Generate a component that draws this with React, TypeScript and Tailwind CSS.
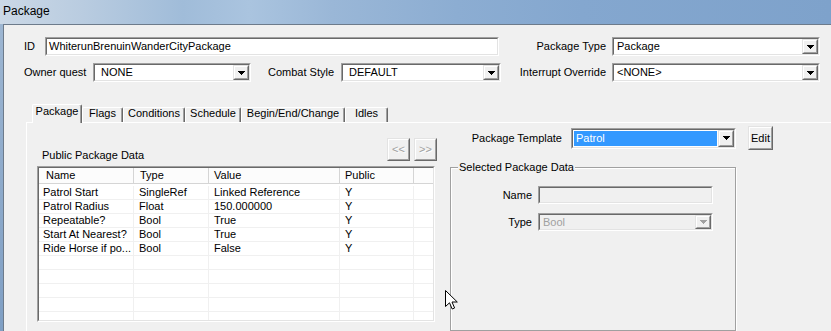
import React from "react";

const sunkenOuter = "border border-[#a0a0a0] border-b-white border-r-white";
const sunkenInner = "border border-[#696969] border-b-[#e3e3e3] border-r-[#e3e3e3]";
const raisedOuter = "border border-[#e3e3e3] border-b-[#696969] border-r-[#696969]";
const raisedInner = "border border-white border-b-[#a0a0a0] border-r-[#a0a0a0]";

const Arrow = ({ disabled }: { disabled?: boolean }) => (
  <div className={`w-[16px] h-full shrink-0 bg-[#f0f0f0] ${raisedOuter}`}>
    <div className={`w-full h-full flex items-center justify-center ${raisedInner}`}>
      <svg width="7" height="4" viewBox="0 0 7 4" shapeRendering="crispEdges">
        <path d="M0 0H7L3.5 4Z" fill={disabled ? "#a0a0a0" : "#000"} />
      </svg>
    </div>
  </div>
);

type ComboProps = {
  size: string;
  text: string;
  pad?: string;
  disabled?: boolean;
  selected?: boolean;
};

const Combo = ({ size, text, pad = "pl-[3px]", disabled, selected }: ComboProps) => (
  <div className={`${size} shrink-0 ${sunkenOuter}`}>
    <div className={`h-full flex ${sunkenInner} ${disabled ? "bg-[#f0f0f0]" : "bg-white"}`}>
      {selected ? (
        <div className="flex-1 flex py-[1px] pl-[1px] pr-[1px]">
          <div className="flex-1 flex items-center bg-[#3399ff] text-white pl-[2px]">{text}</div>
        </div>
      ) : (
        <div className={`flex-1 flex items-center ${pad} ${disabled ? "text-[#a0a0a0]" : ""}`}>{text}</div>
      )}
      <Arrow disabled={disabled} />
    </div>
  </div>
);

const TextBox = ({ size, text, disabled }: { size: string; text?: string; disabled?: boolean }) => (
  <div className={`${size} shrink-0 ${sunkenOuter}`}>
    <div className={`h-full flex items-center pl-[2px] ${sunkenInner} ${disabled ? "bg-[#f0f0f0]" : "bg-white"}`}>
      {text}
    </div>
  </div>
);

const Button = ({ size, children, disabled }: { size: string; children: React.ReactNode; disabled?: boolean }) => (
  <div className={`${size} shrink-0 bg-[#f0f0f0] ${raisedOuter}`}>
    <div
      className={`w-full h-full flex items-center justify-center ${raisedInner} ${
        disabled ? "text-[#a0a0a0] [text-shadow:1px_1px_0_#fff]" : ""
      }`}
    >
      {children}
    </div>
  </div>
);

const tabs = [
  { name: "Package", w: "w-[50px]" },
  { name: "Flags", w: "w-[41px]" },
  { name: "Conditions", w: "w-[62px]" },
  { name: "Schedule", w: "w-[56px]" },
  { name: "Begin/End/Change", w: "w-[104px]" },
  { name: "Idles", w: "w-[43px]" },
];

const cols = [
  { w: "w-[95px]", hp: "pl-[7px]", rp: "pl-[4px]" },
  { w: "w-[75px]", hp: "pl-[6px]", rp: "pl-[5px]" },
  { w: "w-[131px]", hp: "pl-[5px]", rp: "pl-[5px]" },
  { w: "w-[74px]", hp: "pl-[5px]", rp: "pl-[5px]" },
  { w: "flex-1", hp: "", rp: "" },
];

const headers = ["Name", "Type", "Value", "Public", ""];

const rows = [
  ["Patrol Start", "SingleRef", "Linked Reference", "Y", ""],
  ["Patrol Radius", "Float", "150.000000", "Y", ""],
  ["Repeatable?", "Bool", "True", "Y", ""],
  ["Start At Nearest?", "Bool", "True", "Y", ""],
  ["Ride Horse if po...", "Bool", "False", "Y", ""],
  ["", "", "", "", ""],
  ["", "", "", "", ""],
  ["", "", "", "", ""],
  ["", "", "", "", ""],
  ["", "", "", "", ""],
];

const App = () => {
  return (
    <div className="relative w-[831px] h-[331px] overflow-hidden flex flex-col bg-[#f0f0f0] text-black text-[11px] leading-[13px] font-['Liberation_Sans',Arial,sans-serif]">
      {/* title bar */}
      <div className="h-[24px] shrink-0 flex items-center pl-[3px] pb-[1px] text-[12px] bg-[linear-gradient(90deg,#cbd8e6_0%,#b9cce0_10%,#a0bcd9_22%,#aac4df_30%,#9ab7d7_40%,#8cadd2_55%,#84a7cf_70%,#7ea2cb_100%)]">
        Package
      </div>

      <div className="flex flex-1 min-h-0">
        <div className="w-[3px] shrink-0 bg-[linear-gradient(180deg,#9db6d2,#7f9fc4)]" />
        <div className="flex-1 flex flex-col border-l border-t border-[#6d7b8b] bg-[#f0f0f0]">
          {/* row 1 */}
          <div className="mt-[12px] h-[19px] flex items-center">
            <div className="ml-[20px] w-[21px] shrink-0">ID</div>
            <TextBox size="w-[454px] h-[19px]" text="WhiterunBrenuinWanderCityPackage" />
            <div className="w-[107px] shrink-0 text-right">Package Type</div>
            <div className="ml-[6px]">
              <Combo size="w-[208px] h-[19px]" text="Package" />
            </div>
          </div>

          {/* row 2 */}
          <div className="mt-[7px] h-[19px] flex items-center">
            <div className="ml-[20px] w-[69px] shrink-0">Owner quest</div>
            <Combo size="w-[158px] h-[19px]" text="NONE" pad="pl-[6px]" />
            <div className="w-[90px] shrink-0 text-right pr-[7px]">Combat Style</div>
            <Combo size="w-[160px] h-[19px]" text="DEFAULT" pad="pl-[6px]" />
            <div className="w-[111px] shrink-0 text-right pr-[6px]">Interrupt Override</div>
            <Combo size="w-[208px] h-[19px]" text="<NONE>" />
          </div>

          {/* tabs */}
          <div className="mt-[22px] ml-[22px] pl-[6px] h-[18px] flex items-end">
            {tabs.map((t, i) =>
              i === 0 ? (
                <div
                  key={t.name}
                  className={`${t.w} h-[19px] -mb-[1px] relative z-10 bg-[#f0f0f0] border-t border-l border-white border-r border-r-[#696969] rounded-tl-[2px] rounded-tr-[2px] shadow-[inset_-1px_0_0_#a0a0a0] flex items-start justify-center`}
                >
                  {t.name}
                </div>
              ) : (
                <div
                  key={t.name}
                  className={`${t.w} h-[15px] leading-[11px] border-t border-l border-white border-r border-r-[#696969] rounded-tl-[2px] rounded-tr-[2px] shadow-[inset_-1px_0_0_#a0a0a0] flex items-start justify-center`}
                >
                  {t.name}
                </div>
              )
            )}
          </div>

          {/* tab panel */}
          <div className="ml-[22px] flex-1 flex border-t border-l border-white">
            {/* left column */}
            <div className="ml-[10px] mt-[15px] w-[400px] shrink-0 flex flex-col">
              <div className="h-[24px] flex items-end justify-between">
                <div className="ml-[5px]">Public Package Data</div>
                <div className="flex gap-[4px] mb-[1px]">
                  <Button size="w-[23px] h-[23px]" disabled>
                    &lt;&lt;
                  </Button>
                  <Button size="w-[23px] h-[23px]" disabled>
                    &gt;&gt;
                  </Button>
                </div>
              </div>

              <div className={`mt-[4px] w-[398px] h-[156px] ${sunkenOuter}`}>
                <div className={`h-full flex flex-col bg-white overflow-hidden ${sunkenInner}`}>
                  <div className="h-[16px] shrink-0 flex border-b border-[#d5d5d5] bg-[#fcfcfc]">
                    {headers.map((h, i) => (
                      <div
                        key={i}
                        className={`${cols[i].w} ${cols[i].hp} shrink-0 h-full flex items-center ${
                          i < 4 ? "border-r border-[#d5d5d5]" : ""
                        }`}
                      >
                        {h}
                      </div>
                    ))}
                  </div>
                  <div className="mt-[2px] flex flex-col">
                    {rows.map((r, ri) => (
                      <div key={ri} className="h-[14px] shrink-0 flex border-b border-[#f0f0f0]">
                        {r.map((c, ci) => (
                          <div
                            key={ci}
                            className={`${cols[ci].w} ${cols[ci].rp} shrink-0 h-full flex items-center whitespace-nowrap ${
                              ci < 4 ? "border-r border-[#f0f0f0]" : ""
                            }`}
                          >
                            {c}
                          </div>
                        ))}
                      </div>
                    ))}
                  </div>
                </div>
              </div>
            </div>

            {/* right column */}
            <div className="ml-[13px] mt-[3px] flex flex-col">
              <div className="h-[24px] shrink-0 flex items-center">
                <div className="w-[121px] shrink-0 text-right pr-[9px]">Package Template</div>
                <Combo size="w-[165px] h-[21px]" text="Patrol" selected />
                <div className="ml-[12px]">
                  <Button size="w-[25px] h-[24px]">Edit</Button>
                </div>
              </div>

              {/* group box */}
              <div className="mt-[17px] w-[286px] h-[164px] shrink-0 border border-[#a0a0a0] shadow-[inset_1px_1px_0_#fff,1px_1px_0_#fff]">
                <div className="-mt-[7px] ml-[7px] w-fit px-[1px] bg-[#f0f0f0]">Selected Package Data</div>
                <div className="mt-[12px] h-[18px] flex items-center">
                  <div className="w-[87px] shrink-0 text-right pr-[6px]">Name</div>
                  <TextBox size="w-[175px] h-[18px]" disabled />
                </div>
                <div className="mt-[9px] h-[18px] flex items-center">
                  <div className="w-[87px] shrink-0 text-right pr-[6px]">Type</div>
                  <Combo size="w-[175px] h-[18px]" text="Bool" disabled />
                </div>
              </div>
            </div>
          </div>
        </div>
      </div>

      {/* mouse pointer */}
      <svg className="absolute left-[445px] top-[290px]" width="13" height="21" viewBox="0 0 13 21">
        <path
          d="M0.5 0.5V16.5L4.5 12.8L7.2 19L9.6 18L7 12H12.3Z"
          fill="#fff"
          stroke="#000"
          strokeWidth="1"
          strokeLinejoin="miter"
        />
      </svg>
    </div>
  );
};

export default App;
